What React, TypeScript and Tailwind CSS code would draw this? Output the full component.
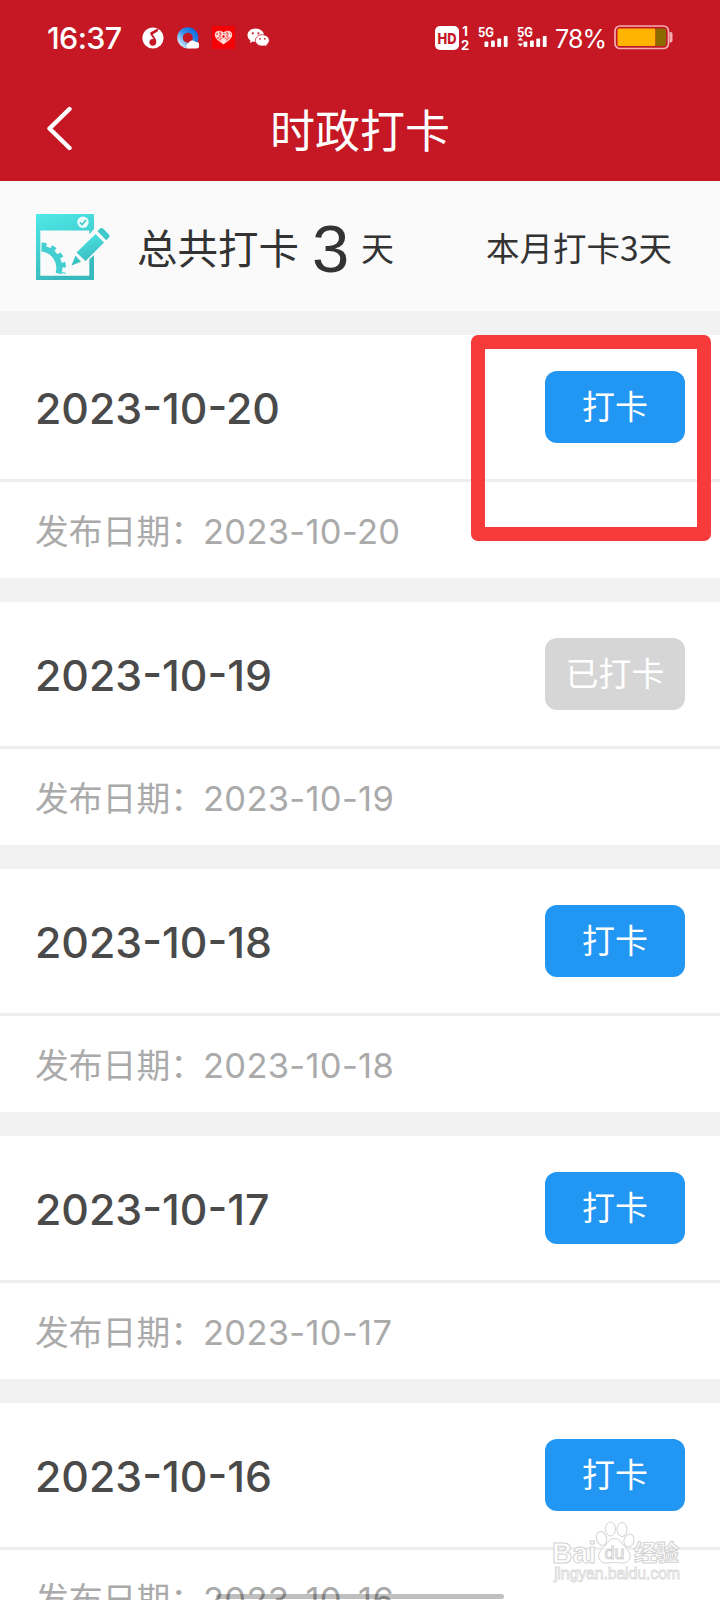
import type { ReactNode } from "react";

interface ClockInRecord {
  date: string;
  done: boolean;
}

const records: ClockInRecord[] = [
  { date: "2023-10-20", done: false },
  { date: "2023-10-19", done: true },
  { date: "2023-10-18", done: false },
  { date: "2023-10-17", done: false },
  { date: "2023-10-16", done: false },
];

function SignalIcon({ arrows }: { arrows?: boolean }) {
  return (
    <svg width="31" height="24" viewBox="0 0 31 24" fill="#fff">
      <text x="0" y="11" fontFamily="Inter, sans-serif" fontSize="12.5" fontWeight="700" textLength="16" lengthAdjust="spacingAndGlyphs">
        5G
      </text>
      {arrows && <path d="M0.5 14.5 3.4 11.5 6.3 14.5ZM0.5 17.5 3.4 20.5 6.3 17.5Z" />}
      <rect x="6.5" y="15.5" width="3.8" height="5.5" rx="0.8" />
      <rect x="13" y="14.5" width="3.8" height="6.5" rx="0.8" />
      <rect x="19.3" y="12.5" width="3.8" height="8.5" rx="0.8" />
      <rect x="25.8" y="10" width="3.8" height="11" rx="0.8" />
    </svg>
  );
}

function StatusBar() {
  return (
    <div className="h-[75px] flex items-center px-[47px] text-white">
      <div className="w-[95px] font-['Inter',sans-serif] font-medium text-[30.5px] leading-[75px] tracking-[-0.6px] whitespace-nowrap">
        16:37
      </div>
      <svg width="22" height="22" viewBox="0 0 22 22" className="shrink-0">
        <circle cx="11" cy="11" r="10.6" fill="#fff" />
        <path d="M9 6C9.5 9 13.5 10.5 13.5 15" fill="none" stroke="#c51724" strokeWidth="1.8" />
        <path d="M8.2 5.5 17 0.8 15.5 4.5 9.8 8Z" fill="#c51724" />
        <circle cx="10.8" cy="15.3" r="3.4" fill="#c51724" />
      </svg>
      <svg width="22" height="22" viewBox="0 0 22 22" className="ml-[13px] shrink-0">
        <defs>
          <linearGradient id="ring" x1="1" y1="0" x2="0" y2="1">
            <stop offset="0" stopColor="#0b6be0" />
            <stop offset="0.5" stopColor="#3a91e8" />
            <stop offset="1" stopColor="#d8effc" />
          </linearGradient>
        </defs>
        <circle cx="10.8" cy="10.8" r="7.8" fill="none" stroke="url(#ring)" strokeWidth="5.6" />
        <path d="M11 21.5a3 3 0 0 1 .5-5.4 4.4 4.4 0 0 1 7.3-1 3.2 3.2 0 0 1 .8 6.4Z" fill="#fff" />
      </svg>
      <svg width="23" height="23" viewBox="0 0 23 23" className="ml-[13px] shrink-0">
        <rect width="23" height="23" fill="#f50006" />
        <path d="M11.5 18.5C6 15 2.8 12 2.8 8.6c0-4 5.8-5.2 8.7-2 2.9-3.2 8.7-2 8.7 2 0 3.4-3.2 6.4-8.7 9.9Z" fill="#ffd9d5" />
        <path d="M4 8h15M5 12h13M8 5.5v10M15 5.5v10" stroke="#f50006" strokeWidth="0.9" strokeDasharray="2 1.5" />
        <circle cx="11.5" cy="10.5" r="1.8" fill="#f50006" stroke="#fff" />
      </svg>
      <svg width="23" height="20" viewBox="0 0 23 20" className="ml-[12px] shrink-0">
        <path d="M8.6.6C4 .6.5 3.5.5 7.3c0 2.1 1.2 4 3 5.2l-.7 2.4 2.9-1.4c1 .3 2 .4 3.2.4C13.3 13.9 17 11 17 7.3S13.2.6 8.6.6Z" fill="#fff" />
        <circle cx="5.8" cy="5.3" r="1.1" fill="#c51724" />
        <circle cx="11.4" cy="5.3" r="1.1" fill="#c51724" />
        <path d="M15.4 6.7c-3.9 0-7 2.5-7 5.7s3.1 5.7 7 5.7c.8 0 1.6-.1 2.4-.3l2.3 1.2-.6-2c1.7-1.1 2.8-2.7 2.8-4.6 0-3.2-3-5.7-6.9-5.7Z" fill="#fff" stroke="#c51724" strokeWidth="0.8" />
        <circle cx="13" cy="10.8" r="0.9" fill="#c51724" />
        <circle cx="17.8" cy="10.8" r="0.9" fill="#c51724" />
      </svg>
      <div className="flex-1" />
      <div className="w-[24px] h-[24px] shrink-0 rounded-[5px] bg-white">
        <svg width="24" height="24" viewBox="0 0 24 24">
          <text x="2.5" y="17.5" fill="#c51724" fontFamily="Inter, sans-serif" fontSize="15" fontWeight="800" textLength="19" lengthAdjust="spacingAndGlyphs">
            HD
          </text>
        </svg>
      </div>
      <div className="ml-px w-[10px] shrink-0 flex flex-col items-center font-['Inter',sans-serif] font-bold text-[13px] leading-[14px]">
        <span>1</span>
        <span>2</span>
      </div>
      <div className="ml-[8px] shrink-0"><SignalIcon /></div>
      <div className="ml-[8px] shrink-0"><SignalIcon arrows /></div>
      <div className="ml-[7px] w-[51px] font-['Inter',sans-serif] text-[25px] leading-[75px] tracking-[-0.9px] pt-[3px] whitespace-nowrap">
        78%
      </div>
      <svg width="59" height="25" viewBox="0 0 59 25" className="ml-[8px] shrink-0">
        <rect x="1" y="1" width="53.5" height="22.5" rx="5" fill="none" stroke="#f4adb0" strokeWidth="1.7" />
        <rect x="3.5" y="3.5" width="38" height="17.5" rx="1.5" fill="#ffb400" />
        <path d="M41.5 3.5h8.500a2 2 0 0 1 2 2v13.500a2 2 0 0 1-2 2h-8.500Z" fill="#8b6b00" />
        <path d="M55.5 7h1a2 2 0 0 1 2 2v6.500a2 2 0 0 1-2 2h-1Z" fill="#f4adb0" />
      </svg>
    </div>
  );
}

function TitleBar() {
  return (
    <div className="h-[106px] grid grid-cols-[1fr_auto_1fr] items-center text-white">
      <svg width="28" height="46" viewBox="0 0 28 46" className="ml-[46px]">
        <path d="M23.5 4 3.5 23.5 23.5 43" fill="none" stroke="#fff" strokeWidth="4.4" strokeLinecap="round" strokeLinejoin="round" />
      </svg>
      <h1 className="text-[45px] leading-[104px] pt-[2px]">时政打卡</h1>
    </div>
  );
}

function ClockInIcon() {
  return (
    <svg width="74" height="68" viewBox="0 0 74 68" className="shrink-0">
      <defs>
        <linearGradient id="teal" x1="0" y1="0" x2="0.3" y2="1">
          <stop offset="0" stopColor="#4fe9e8" />
          <stop offset="1" stopColor="#38b9bd" />
        </linearGradient>
      </defs>
      <path d="M0 1h58v66H0Z M4.3 17.5v45.2h49V17.5Z" fill="url(#teal)" fillRule="evenodd" />
      <circle cx="47" cy="9.3" r="5.7" fill="#eafcfb" />
      <path d="m43.8 9.4 2.3 2.3 4-4.6" fill="none" stroke="#3cc7c8" strokeWidth="1.6" />
      {/* gear quarter: body, then teeth */}
      <path d="M5.5 35.5a19.5 19.5 0 0 1 17 25" fill="none" stroke="#43cfd1" strokeWidth="6" />
      <path d="M5.5 31.5a24 24 0 0 1 22 29" fill="none" stroke="#43cfd1" strokeWidth="4" strokeDasharray="5 5" />
      <path d="M36 52.5 39 39 60 16 73 27 49 48Z" fill="#fafafa" stroke="#fafafa" strokeWidth="3" />
      <path d="M35.5 52.5 39.5 42.5 45 48.7Z M40.5 39.5 59.5 21 68 29.5 49.5 48Z" fill="url(#teal)" />
      <path d="m61.5 18.2 2-2.2q2-2 4 0l5 5q2 2 0 4l-2.3 2.3Z" fill="#3fc9cb" />
    </svg>
  );
}

function Summary() {
  return (
    <div className="h-[130px] shrink-0 bg-[#fafafa] flex items-center pl-[36px] pr-[48px] pt-[2px] text-[#333]">
      <ClockInIcon />
      <span className="ml-[27px] text-[40.5px] leading-[60px]">总共打卡</span>
      <span className="ml-[13px] w-[38px] pt-[3px] font-['Liberation_Sans',sans-serif] text-[67px] leading-[67px]">3</span>
      <span className="ml-[11px] text-[33px] leading-[48px]">天</span>
      <span className="ml-auto text-[33.5px] leading-[48px] pb-px whitespace-nowrap">本月打卡3天</span>
    </div>
  );
}

function RecordCard({ date, done }: ClockInRecord) {
  return (
    <div className="mt-[24px] bg-white shrink-0">
      <div className="h-[147px] border-b-[3px] border-[#eee] flex items-center justify-between px-[35px]">
        <span className="font-['Inter',sans-serif] font-[450] text-[42.8px] leading-[60px] text-[#4a4a4a] pt-[3px]">{date}</span>
        <button
          className={
            done
              ? "w-[140px] h-[72px] rounded-[12px] bg-[#d6d6d6] text-white text-[33px] leading-[69px] pb-[3px]"
              : "w-[140px] h-[72px] rounded-[12px] bg-[#2196f3] text-white text-[33px] leading-[69px] pb-[3px]"
          }
        >
          {done ? "已打卡" : "打卡"}
        </button>
      </div>
      <div className="h-[96px] flex items-center px-[35px] text-[#aaa]">
        <span className="w-[167px] text-[33.8px] leading-[50px] whitespace-nowrap">发布日期：</span>
        <span className="font-['Inter',sans-serif] text-[34.5px] leading-[50px] tracking-[0.3px] pt-[4px] pl-[1px]">{date}</span>
      </div>
    </div>
  );
}

function Watermark() {
  return (
    <div className="absolute left-[550px] top-[1520px] w-[134px]">
      <svg width="134" height="44" viewBox="0 0 134 44" className="block">
        <g fill="#fff" fillOpacity="0.85" stroke="#d2d2d2" strokeWidth="1">
          <ellipse cx="51.5" cy="18.5" rx="5" ry="7" transform="rotate(-15 51.5 18.5)" />
          <ellipse cx="60.5" cy="9" rx="5" ry="7" />
          <ellipse cx="72" cy="9.5" rx="5" ry="7" />
          <ellipse cx="79" cy="20.5" rx="5" ry="6.5" transform="rotate(15 79 20.5)" />
          <path d="M64.5 18.5c-5 0-6.5 4-10 8-4 4-6.5 6.5-5.5 11 1 5 5.5 6 9.5 5.5 4-.6 8-.6 12 0 4 .5 8.5-.5 9.5-5.5 1-4.5-2-7-5.5-11-3.5-4-5-8-10-8Z" />
          <text x="2" y="42.5" fontFamily="Liberation Sans, sans-serif" fontWeight="700" fontSize="29" textLength="44" lengthAdjust="spacingAndGlyphs">Bai</text>
          <text x="54.5" y="39" fontFamily="Liberation Sans, sans-serif" fontSize="18" textLength="20">du</text>
          <text x="84" y="41" fontFamily="Noto Sans CJK SC, sans-serif" fontWeight="700" fontSize="23" textLength="45">经验</text>
        </g>
      </svg>
      <svg width="134" height="20" viewBox="0 0 134 20" className="block">
        <text x="4" y="14.5" fill="#fff" stroke="#d8d8d8" strokeWidth="0.8" fontFamily="Liberation Sans, sans-serif" fontSize="16" textLength="126">jingyan.baidu.com</text>
      </svg>
    </div>
  );
}

function Screen({ children }: { children: ReactNode }) {
  return (
    <div className="relative w-[720px] h-[1600px] overflow-hidden bg-[#f2f2f2] flex flex-col font-['Noto_Sans_CJK_SC',sans-serif]">
      {children}
    </div>
  );
}

export default function App() {
  return (
    <Screen>
      <header className="bg-[#c51724] shrink-0">
        <StatusBar />
        <TitleBar />
      </header>
      <Summary />
      {records.map((r) => (
        <RecordCard key={r.date} {...r} />
      ))}

      {/* highlight around the first clock-in button */}
      <div className="absolute left-[471px] top-[335px] w-[240px] h-[206px] border-[14px] border-[#f73b3b] rounded-[7px]" />
      <Watermark />
      <div className="absolute left-[216px] top-[1594px] w-[288px] h-[5px] rounded-full bg-black/25" />
    </Screen>
  );
}
